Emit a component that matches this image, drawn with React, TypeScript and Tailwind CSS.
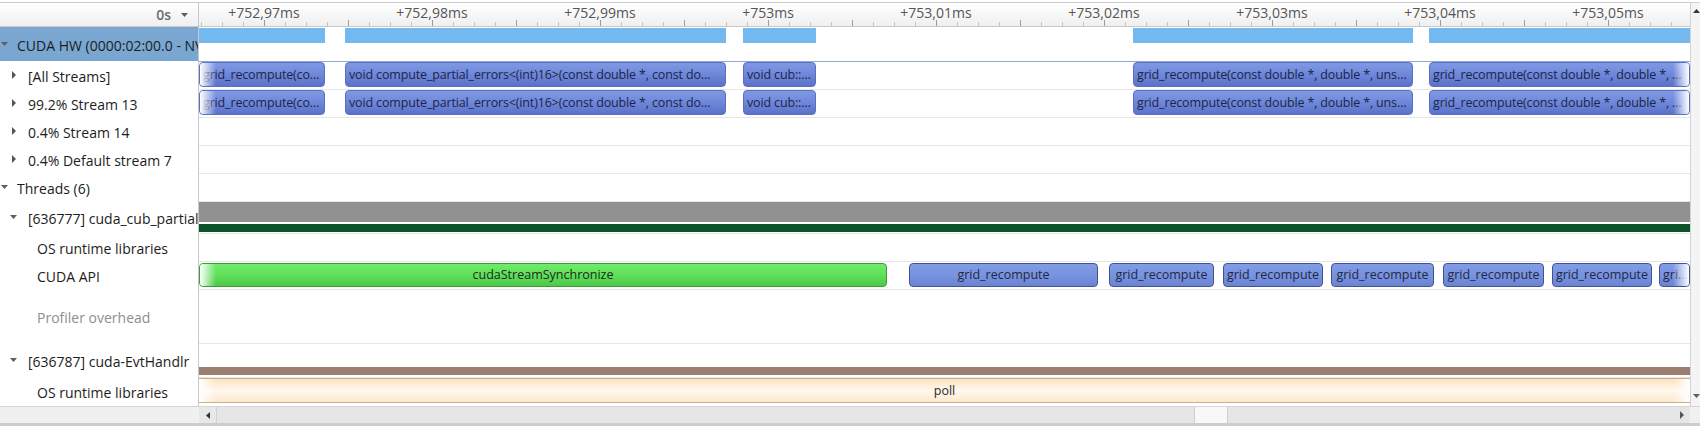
import React from 'react';

type Tri = 'down' | 'right' | null;

interface TreeRow {
  label: string;
  h: number;
  level: 0 | 1 | 2;
  tri: Tri;
  muted?: boolean;
  selected?: boolean;
}

interface Box {
  left: number;
  w: number;
  text: string;
  fadeL?: boolean;
  fadeR?: boolean;
}

const treeRows: TreeRow[] = [
  { label: 'CUDA HW (0000:02:00.0 - NVIDIA GeForce)', h: 34, level: 0, tri: 'down', selected: true },
  { label: '[All Streams]', h: 28, level: 1, tri: 'right' },
  { label: '99.2% Stream 13', h: 28, level: 1, tri: 'right' },
  { label: '0.4% Stream 14', h: 28, level: 1, tri: 'right' },
  { label: '0.4% Default stream 7', h: 28, level: 1, tri: 'right' },
  { label: 'Threads (6)', h: 28, level: 0, tri: 'down' },
  { label: '[636777] cuda_cub_partial_errors', h: 32, level: 1, tri: 'down' },
  { label: 'OS runtime libraries', h: 28, level: 2, tri: null },
  { label: 'CUDA API', h: 28, level: 2, tri: null },
  { label: 'Profiler overhead', h: 54, level: 2, tri: null, muted: true },
  { label: '[636787] cuda-EvtHandlr', h: 34, level: 1, tri: 'down' },
  { label: 'OS runtime libraries', h: 29, level: 2, tri: null },
];

const hwBars = [
  { left: 0, w: 126 },
  { left: 146, w: 381 },
  { left: 544, w: 73 },
  { left: 934, w: 280 },
  { left: 1230, w: 261 },
];

const kernelBoxes: Box[] = [
  { left: 0, w: 126, text: 'grid_recompute(co…', fadeL: true },
  { left: 146, w: 381, text: 'void compute_partial_errors<(int)16>(const double *, const do…' },
  { left: 544, w: 73, text: 'void cub::…' },
  { left: 934, w: 280, text: 'grid_recompute(const double *, double *, uns…' },
  { left: 1230, w: 261, text: 'grid_recompute(const double *, double *, …', fadeR: true },
];

const apiBoxes: Box[] = [
  { left: 710, w: 189, text: 'grid_recompute' },
  { left: 910, w: 105, text: 'grid_recompute' },
  { left: 1024, w: 100, text: 'grid_recompute' },
  { left: 1132, w: 103, text: 'grid_recompute' },
  { left: 1244, w: 101, text: 'grid_recompute' },
  { left: 1353, w: 100, text: 'grid_recompute' },
  { left: 1460, w: 31, text: 'gri…', fadeR: true },
];

const rulerLabels = [
  '+752,97ms',
  '+752,98ms',
  '+752,99ms',
  '+753ms',
  '+753,01ms',
  '+753,02ms',
  '+753,03ms',
  '+753,04ms',
  '+753,05ms',
];

const ticks = Array.from({ length: 71 }, (_, k) => 2 + 21 * k);

const TriIcon = ({ dir }: { dir: 'down' | 'right' | 'left' | 'up' }) => {
  if (dir === 'down')
    return (
      <svg width="7" height="4" viewBox="0 0 7 4">
        <path d="M0 0h7L3.5 4z" fill="#5f5f5f" />
      </svg>
    );
  if (dir === 'up')
    return (
      <svg width="7" height="4" viewBox="0 0 7 4">
        <path d="M0 4h7L3.5 0z" fill="#333" />
      </svg>
    );
  if (dir === 'left')
    return (
      <svg width="4" height="7" viewBox="0 0 4 7">
        <path d="M4 0v7L0 3.5z" fill="#333" />
      </svg>
    );
  return (
    <svg width="4" height="8" viewBox="0 0 4 8">
      <path d="M0 0v8l4-4z" fill="#555" />
    </svg>
  );
};

const Fades = ({ l, r }: { l?: boolean; r?: boolean }) => (
  <>
    {l && <div className="absolute inset-y-0 left-0 w-[16px] bg-linear-to-r from-white to-transparent" />}
    {r && <div className="absolute inset-y-0 right-0 w-[16px] bg-linear-to-l from-white to-transparent" />}
  </>
);

const TreeLabel = ({ row }: { row: TreeRow }) => {
  const pad = row.level === 0 ? 'w-[17px] pl-[1px]' : row.level === 1 ? (row.tri === 'right' ? 'w-[28px] pl-[12px]' : 'w-[28px] pl-[10px]') : 'w-[37px]';
  return (
    <div
      style={{ height: row.h }}
      className={`flex items-center overflow-hidden whitespace-nowrap ${row.selected ? 'bg-[#7aa7d2]' : 'bg-white'}`}
    >
      <div className={`flex shrink-0 items-center ${pad}`}>{row.tri && <TriIcon dir={row.tri} />}</div>
      <span className={`pt-[2px] ${row.muted ? 'text-[#8e8e8e]' : 'text-[#1c1c1c]'}`}>{row.label}</span>
    </div>
  );
};

const KernelBoxes = () => (
  <>
    {kernelBoxes.map((b) => (
      <div
        key={b.left}
        style={{ left: b.left, width: b.w }}
        className="absolute top-0 h-[25px] overflow-hidden rounded-[4px] border border-[#5a6fc4] bg-linear-to-b from-[#8099e4] via-[#6e87da] to-[#5b72c8] pl-[3px] text-[12.5px] leading-[23px] tracking-[-0.15px] whitespace-nowrap text-[#1d2547]"
      >
        <span className="block truncate pr-[2px]">{b.text}</span>
        <Fades l={b.fadeL} r={b.fadeR} />
      </div>
    ))}
  </>
);

const EmptyRow = ({ h }: { h: number }) => <div style={{ height: h }} className="border-t border-[#e6e6e6]" />;

export default function App() {
  return (
    <div className="flex h-[426px] w-[1700px] flex-col overflow-hidden bg-white pt-[2px] font-['Open_Sans','Noto_Sans',sans-serif] text-[14px]">
      <div className="flex h-[404px]">
        {/* tree */}
        <div className="flex w-[198px] shrink-0 flex-col">
          <div className="flex h-[25px] items-center justify-end gap-[10px] border-y border-[#c9c9c9] bg-linear-to-b from-white to-[#efefef] pr-[10px]">
            <span className="font-semibold text-[#6d6d6d]">0s</span>
            <TriIcon dir="down" />
          </div>
          {treeRows.map((r, i) => (
            <TreeLabel key={i} row={r} />
          ))}
        </div>
        <div className="w-[1px] shrink-0 bg-[#c8c8c8]" />

        {/* timeline */}
        <div className="flex w-[1491px] shrink-0 flex-col">
          <div className="relative h-[25px] border-y border-[#c9c9c9] bg-linear-to-b from-white to-[#efefef]">
            <svg className="absolute top-0 left-0" width={1491} height={23}>
              {ticks.map((x, k) => {
                const tall = k % 4 === 3;
                return (
                  <line
                    key={k}
                    x1={x + 0.5}
                    x2={x + 0.5}
                    y1={tall ? 17 : 19}
                    y2={23}
                    stroke={tall ? '#9c9c9c' : '#c2c2c2'}
                  />
                );
              })}
            </svg>
            {rulerLabels.map((t, j) => (
              <span
                key={t}
                style={{ left: 65 + 168 * j }}
                className="absolute top-0 -translate-x-1/2 leading-[20px] whitespace-nowrap text-[#555]"
              >
                {t}
              </span>
            ))}
          </div>

          {/* CUDA HW */}
          <div className="relative h-[34px]">
            {hwBars.map((b) => (
              <div key={b.left} style={{ left: b.left, width: b.w }} className="absolute top-[1px] h-[15px] bg-[#73b9f0]" />
            ))}
          </div>
          <div className="relative h-[28px] border-t border-[#8eadd6]">
            <KernelBoxes />
          </div>
          <div className="relative h-[28px] border-t border-[#e6e6e6]">
            <KernelBoxes />
          </div>
          <EmptyRow h={28} />
          <EmptyRow h={28} />
          <EmptyRow h={28} />

          {/* thread 636777 */}
          <div className="relative h-[32px] border-t border-[#e6e6e6]">
            <div className="absolute inset-x-0 top-0 h-[20px] bg-[#919191]" />
            <div className="absolute inset-x-0 top-[22px] h-[8px] bg-[#0b5129]" />
          </div>
          <EmptyRow h={28} />
          {/* CUDA API */}
          <div className="relative h-[28px] border-t border-[#e6e6e6]">
            <div
              style={{ left: 0, width: 688 }}
              className="absolute top-[1px] h-[24px] overflow-hidden rounded-[4px] border border-[#3f9a3a] bg-linear-to-b from-[#70ea6a] via-[#5fe05a] to-[#4cc847] text-center text-[12.5px] leading-[22px] text-[#1e2a1e]"
            >
              cudaStreamSynchronize
              <Fades l />
            </div>
            {apiBoxes.map((b) => (
              <div
                key={b.left}
                style={{ left: b.left, width: b.w }}
                className="absolute top-[1px] h-[24px] overflow-hidden rounded-[4px] border border-[#42548f] bg-linear-to-b from-[#829ce6] via-[#7893df] to-[#6a84d4] text-center text-[12.5px] leading-[22px] whitespace-nowrap text-[#222844]"
              >
                {b.fadeR ? <span className="block pl-[3px] text-left">{b.text}</span> : b.text}
                <Fades r={b.fadeR} />
              </div>
            ))}
          </div>
          <EmptyRow h={54} />
          {/* thread 636787 */}
          <div className="relative h-[34px] border-t border-[#e6e6e6]">
            <div className="absolute inset-x-0 top-[23px] h-[8px] bg-[#9a7f71]" />
          </div>
          <div className="relative h-[29px] border-t border-[#e6e6e6]">
            <div className="absolute inset-x-0 top-0 h-[25px] overflow-hidden border-y border-[#c6b291] bg-linear-to-b from-[#fde3bf] via-[#fff8ef] to-[#fde8cc] text-center text-[12.5px] leading-[23px] text-[#2a2a2a]">
              poll
              <Fades l r />
            </div>
          </div>
        </div>

        {/* vertical scrollbar */}
        <div className="flex w-[10px] shrink-0 flex-col items-end justify-between border-t border-l border-[#d3d3d3] bg-[#f4f4f4] pt-[6px] pb-[8px]">
          <TriIcon dir="up" />
          <TriIcon dir="down" />
        </div>
      </div>

      {/* horizontal scrollbar */}
      <div className="flex h-[20px] border-t border-b-[3px] border-t-[#d6d6d6] border-b-[#cdcdcd]">
        <div className="w-[199px] shrink-0 bg-[#f0f0f0]" />
        <div className="flex w-[18px] shrink-0 items-center justify-center border-r border-[#d2d2d2] bg-[#e8e8e8]">
          <TriIcon dir="left" />
        </div>
        <div className="flex w-[1457px] shrink-0 bg-[#e6e6e6]">
          <div className="ml-[977px] w-[34px] border-x border-[#d0d0d0] bg-[#f8f8f8]" />
        </div>
        <div className="flex w-[16px] shrink-0 items-center justify-center bg-[#e6e6e6]">
          <TriIcon dir="right" />
        </div>
        <div className="flex-1 bg-[#f0f0f0]" />
      </div>
    </div>
  );
}
